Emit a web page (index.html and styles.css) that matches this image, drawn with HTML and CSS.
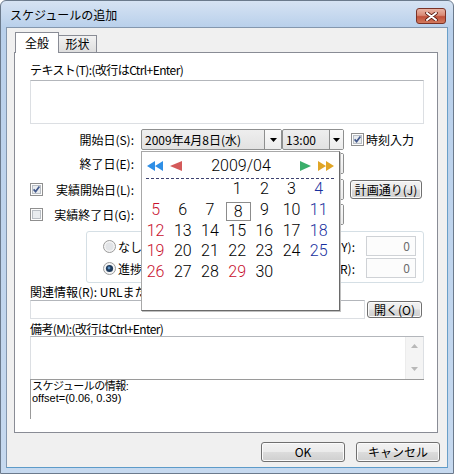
FILE: index.html
```html
<!DOCTYPE html>
<html lang="ja">
<head>
<meta charset="utf-8">
<title>スケジュールの追加</title>
<link rel="stylesheet" href="styles.css">
</head>
<body>
<div class="window">
  <div class="titlebar">
    <span class="title">スケジュールの追加</span>
    <span class="close">
      <svg width="13" height="9" viewBox="0 0 13 9"><path d="M2 1 L11 8 M11 1 L2 8" stroke="#5a1d14" stroke-width="3.6" stroke-linecap="round"/><path d="M2 1 L11 8 M11 1 L2 8" stroke="#fff" stroke-width="2" stroke-linecap="round"/></svg>
    </span>
  </div>
  <div class="client">
    <div class="tabs">
      <div class="tab active">全般</div>
      <div class="tab">形状</div>
    </div>
    <div class="panel">
      <div class="lbl tight">テキスト(T):(改行はCtrl+Enter)</div>
      <div class="textbox"></div>

      <div class="row r1">
        <div class="row-label">開始日(S):</div>
        <div class="combo date"><span class="combo-text">2009年4月8日(水)</span><span class="drop"><svg width="7" height="4" viewBox="0 0 7 4"><path d="M0 0 H7 L3.5 4 Z" fill="#000"/></svg></span></div>
        <div class="combo time"><span class="combo-text">13:00</span><span class="drop"><svg width="7" height="4" viewBox="0 0 7 4"><path d="M0 0 H7 L3.5 4 Z" fill="#000"/></svg></span></div>
        <div class="check"><span class="cb"><svg width="13" height="13" viewBox="0 0 13 13"><rect x="0.5" y="0.5" width="12" height="12" fill="#fdfdfd" stroke="#8f8f8f"/><rect x="2.5" y="2.5" width="8" height="8" fill="#e9ecef" stroke="#b9bec4"/><path d="M3.6 6.4 L5.6 8.6 L9.4 3.6" stroke="#43598c" stroke-width="1.7" fill="none"/></svg></span>時刻入力</div>
      </div>

      <div class="row r2">
        <div class="row-label">終了日(E):</div>
        <div class="combo date"><span class="combo-text"></span><span class="drop"></span></div>
        <div class="combo time"><span class="combo-text"></span><span class="drop"></span></div>
      </div>

      <div class="row r3">
        <div class="row-label cbl"><span class="cb"><svg width="13" height="13" viewBox="0 0 13 13"><rect x="0.5" y="0.5" width="12" height="12" fill="#fdfdfd" stroke="#8f8f8f"/><rect x="2.5" y="2.5" width="8" height="8" fill="#e9ecef" stroke="#b9bec4"/><path d="M3.6 6.4 L5.6 8.6 L9.4 3.6" stroke="#43598c" stroke-width="1.7" fill="none"/></svg></span><span>実績開始日(L):</span></div>
        <div class="combo date"><span class="combo-text"></span><span class="drop"></span></div>
        <div class="combo time"><span class="combo-text"></span><span class="drop"></span></div>
        <button class="btn plan">計画通り(J)</button>
      </div>

      <div class="row r4">
        <div class="row-label cbl"><span class="cb"><svg width="13" height="13" viewBox="0 0 13 13"><rect x="0.5" y="0.5" width="12" height="12" fill="#fdfdfd" stroke="#8f8f8f"/><rect x="2.5" y="2.5" width="8" height="8" fill="#e9ecef" stroke="#b9bec4"/></svg></span><span>実績終了日(G):</span></div>
        <div class="combo date"><span class="combo-text"></span><span class="drop"></span></div>
        <div class="combo time"><span class="combo-text"></span><span class="drop"></span></div>
      </div>

      <div class="group">
        <div class="grow">
          <div class="radio"><svg width="13" height="13" viewBox="0 0 13 13"><circle cx="6.5" cy="6.5" r="6" fill="#f4f4f4" stroke="#9a9a9a"/><circle cx="6.5" cy="6.5" r="4" fill="#e2e4e7"/></svg><span>なし(</span></div>
          <div class="gfield"><span>Y):</span><span class="num">0</span></div>
        </div>
        <div class="grow">
          <div class="radio"><svg width="13" height="13" viewBox="0 0 13 13"><circle cx="6.5" cy="6.5" r="6" fill="#f4f4f4" stroke="#9a9a9a"/><circle cx="6.5" cy="6.5" r="3.6" fill="#1f3b5c"/><circle cx="6" cy="6" r="1.4" fill="#5f93c4"/></svg><span>進捗</span></div>
          <div class="gfield"><span>R):</span><span class="num">0</span></div>
        </div>
      </div>

      <div class="lbl l-url">関連情報(R): URLまた</div>
      <div class="url-row">
        <div class="urlbox"></div>
        <button class="btn open">開く(O)</button>
      </div>

      <div class="lbl l-memo tight">備考(M):(改行はCtrl+Enter)</div>
      <div class="memo">
        <div class="vscroll">
          <svg width="7" height="4" viewBox="0 0 7 4"><path d="M0 4 L3.5 0 L7 4 Z" fill="#b8b8b8"/></svg>
          <svg width="7" height="4" viewBox="0 0 7 4"><path d="M0 0 H7 L3.5 4 Z" fill="#b8b8b8"/></svg>
        </div>
      </div>
      <div class="info">
        <div class="info-jp">スケジュールの情報:</div>
        <div>offset=(0.06, 0.39)</div>
      </div>

      <div class="calendar">
        <div class="cal-head">
          <svg class="arr" width="16" height="10" viewBox="0 0 16 10"><path d="M8 0 L0 5 L8 10 Z M16 0 L8 5 L16 10 Z" fill="#2f8fe6"/></svg>
          <svg class="arr red" width="12" height="10" viewBox="0 0 12 10"><path d="M12 0 L0 5 L12 10 Z" fill="#d45a5a"/></svg>
          <span class="cal-title">2009/04</span>
          <svg class="arr" width="11" height="10" viewBox="0 0 11 10"><path d="M0 0 L11 5 L0 10 Z" fill="#3aae6a"/></svg>
          <svg class="arr gold" width="16" height="10" viewBox="0 0 16 10"><path d="M0 0 L8 5 L0 10 Z M8 0 L16 5 L8 10 Z" fill="#e0a526"/></svg>
        </div>
        <div class="cal-line"></div>
        <div class="cal-grid">
          <span></span><span></span><span></span><span>1</span><span>2</span><span>3</span><span class="sat">4</span>
          <span class="sun">5</span><span>6</span><span>7</span><span><b class="today">8</b></span><span>9</span><span>10</span><span class="sat">11</span>
          <span class="sun">12</span><span>13</span><span>14</span><span>15</span><span>16</span><span>17</span><span class="sat">18</span>
          <span class="sun">19</span><span>20</span><span>21</span><span>22</span><span>23</span><span>24</span><span class="sat">25</span>
          <span class="sun">26</span><span>27</span><span>28</span><span class="sun">29</span><span>30</span><span></span><span></span>
        </div>
      </div>
    </div>
    <div class="buttons">
      <button class="btn big">OK</button>
      <button class="btn big">キャンセル</button>
    </div>
  </div>
</div>
</body>
</html>
```
FILE: styles.css
```css
html, body {
  margin: 0;
  background: #ffffff;
}
body {
  font-family: "Noto Sans CJK JP", sans-serif;
  font-size: 12px;
  color: #000;
}
.window {
  box-sizing: border-box;
  width: 454px;
  height: 474px;
  border: 1px solid #6b7a8c;
  border-radius: 6px 6px 0 0;
  background: linear-gradient(to bottom, #d6e3f3 0, #b9d0eb 26px, #c6d9ef 100%);
  display: flex;
  flex-direction: column;
  overflow: hidden;
}
.titlebar {
  height: 26px;
  flex: none;
  display: flex;
  align-items: flex-start;
  padding-left: 9px;
}
.title {
  margin-top: 7px;
  font-size: 12px;
  line-height: 14px;
}
.close {
  box-sizing: border-box;
  margin: 7px 7px 0 auto;
  width: 30px;
  height: 16px;
  border: 1px solid #7a3226;
  border-radius: 3px;
  background: linear-gradient(to bottom, #e8b3a4 0%, #d98a76 45%, #c0503a 55%, #d27a5e 100%);
  display: flex;
  align-items: center;
  justify-content: center;
}
.client {
  flex: 1;
  margin: 0 5px 5px;
  border: 1px solid #8497ae;
  border-bottom-color: #5d9bc9;
  border-right-color: #6a9fc8;
  background: #f0f0f0;
  display: flex;
  flex-direction: column;
}
.tabs {
  display: flex;
  align-items: flex-end;
  height: 20px;
  margin: 4px 0 0 8px;
  position: relative;
  z-index: 1;
}
.tab {
  box-sizing: border-box;
  width: 38px;
  height: 17px;
  border: 1px solid #898c95;
  border-left: none;
  border-bottom: none;
  background: linear-gradient(to bottom, #f2f2f2, #dedede);
  text-align: center;
  line-height: 16px;
}
.tab.active {
  width: 44px;
  height: 21px;
  margin-bottom: -1px;
  border-left: 1px solid #898c95;
  background: #ffffff;
  line-height: 20px;
}
.panel {
  position: relative;
  box-sizing: border-box;
  width: 424px;
  height: 381px;
  margin-left: 7px;
  border: 1px solid #898c95;
  background: #ffffff;
  padding: 10px 0 0 15px;
}
.lbl {
  height: 14px;
  line-height: 14px;
  white-space: nowrap;
}
.tight {
  letter-spacing: -0.6px;
}
.textbox {
  box-sizing: border-box;
  width: 394px;
  height: 44px;
  margin-top: 3px;
  border: 1px solid #dcdfe3;
  border-top-color: #b3b6bb;
  background: #fff;
}
.row {
  display: flex;
  align-items: center;
  height: 21px;
}
.r1 { margin-top: 5px; }
.r2 { margin-top: 3px; }
.r3 { margin-top: 5px; }
.r4 { margin-top: 4px; }
.row-label {
  width: 104px;
  flex: none;
  margin-right: 7px;
  display: flex;
  align-items: center;
  justify-content: flex-end;
  white-space: nowrap;
  line-height: 14px;
}
.row-label.cbl {
  justify-content: space-between;
}
.combo {
  box-sizing: border-box;
  height: 21px;
  display: flex;
  border: 1px solid #8e8f8f;
  border-radius: 2px;
  background: linear-gradient(to bottom, #eeeeee, #e2e2e2);
  flex: none;
}
.combo.date { width: 141px; }
.combo.time { width: 62px; }
.combo-text {
  flex: 1;
  padding-left: 3px;
  line-height: 19px;
  white-space: nowrap;
  overflow: hidden;
}
.drop {
  width: 16px;
  border-left: 1px solid #8e8f8f;
  background: linear-gradient(to bottom, #fafafa, #ececec);
  display: flex;
  align-items: center;
  justify-content: center;
}
.combo.time .drop { width: 13px; }
.check {
  margin-left: 7px;
  display: flex;
  align-items: center;
  gap: 2px;
  white-space: nowrap;
}
.cb {
  width: 13px;
  height: 13px;
  display: inline-flex;
  flex: none;
}
.btn {
  box-sizing: border-box;
  border: 1px solid #707070;
  border-radius: 3px;
  background: linear-gradient(to bottom, #f2f2f2 0%, #ebebeb 48%, #dcdcdc 52%, #cfcfcf 100%);
  box-shadow: inset 0 0 0 1px #fbfbfb;
  font-family: "Noto Sans CJK JP", sans-serif;
  font-size: 12px;
  color: #000;
  padding: 0;
  line-height: 14px;
  white-space: nowrap;
}
.btn.plan {
  margin-left: 6px;
  width: 72px;
  height: 19px;
}
.group {
  box-sizing: border-box;
  width: 338px;
  height: 52px;
  margin: 6px 0 0 56px;
  border: 1px solid #d5dfe5;
  border-radius: 3px;
  padding: 4px 7px 0 16px;
}
.grow {
  display: flex;
  align-items: center;
  height: 20px;
}
.grow + .grow { margin-top: 2px; }
.radio {
  display: flex;
  align-items: center;
  gap: 2px;
  white-space: nowrap;
}
.gfield {
  margin-left: auto;
  display: flex;
  align-items: center;
  white-space: nowrap;
}
.num {
  box-sizing: border-box;
  width: 50px;
  height: 20px;
  margin-left: 11px;
  border: 1px solid #cfd2d6;
  background: #fcfcfc;
  color: #6d6d6d;
  text-align: right;
  padding-right: 5px;
  line-height: 18px;
}
.l-url { margin-top: 2px; }
.url-row {
  display: flex;
  align-items: center;
  height: 19px;
  margin-top: 1px;
}
.urlbox {
  box-sizing: border-box;
  width: 335px;
  height: 19px;
  border: 1px solid #dcdfe3;
  border-top-color: #b3b6bb;
  background: #fff;
}
.btn.open {
  margin-left: 2px;
  width: 55px;
  height: 17px;
}
.l-memo { margin-top: 3px; }
.memo {
  box-sizing: border-box;
  width: 394px;
  height: 44px;
  border: 1px solid #dcdfe3;
  border-top-color: #b3b6bb;
  background: #fff;
  display: flex;
  justify-content: flex-end;
}
.vscroll {
  width: 17px;
  background: #f4f4f4;
  border-left: 1px solid #ececec;
  display: flex;
  flex-direction: column;
  align-items: center;
  justify-content: space-between;
  padding: 7px 0 8px;
}
.info {
  box-sizing: border-box;
  width: 394px;
  height: 40px;
  margin-top: -1px;
  border-top: 1px solid #9a9a9a;
  border-left: 1px solid #9a9a9a;
  padding-left: 1px;
  font-family: "Liberation Sans", "Noto Sans CJK JP", sans-serif;
  font-size: 11px;
  line-height: 12px;
}
.info-jp {
  letter-spacing: -0.5px;
}
.calendar {
  position: absolute;
  left: 126px;
  top: 98px;
  box-sizing: border-box;
  width: 199px;
  height: 160px;
  border: 1px solid #a8a8a8;
  border-right-color: #6a6a6a;
  border-bottom-color: #6a6a6a;
  background: #fff;
  box-shadow: 1px 1px 0 #c0c0c0;
  z-index: 2;
  font-family: Roboto, "Noto Sans", sans-serif;
}
.cal-head {
  height: 26px;
  display: flex;
  align-items: center;
  padding: 2px 5px 0;
  box-sizing: border-box;
}
.arr { flex: none; }
.arr.red { margin-left: 7px; }
.arr.gold { margin-left: 7px; }
.cal-title {
  flex: 1;
  text-align: center;
  font-size: 16px;
  line-height: 20px;
  font-weight: 300;
}
.cal-line {
  height: 1px;
  margin: 0 3px 0 4px;
  background: repeating-linear-gradient(to right, #3d4270 0 3px, transparent 3px 5px);
}
.cal-grid {
  display: grid;
  grid-template-columns: repeat(7, 27.2px);
  grid-auto-rows: 20.75px;
  font-size: 16px;
  line-height: 20.75px;
  text-align: center;
  font-weight: 300;
}
.sun { color: #c8102e; }
.sat { color: #18309e; }
.today {
  display: inline-block;
  box-sizing: border-box;
  width: 25px;
  height: 19px;
  margin: 2px 0 0 2px;
  border: 1px solid #8c8c8c;
  line-height: 17px;
  font-weight: 300;
  vertical-align: top;
}
.buttons {
  display: flex;
  justify-content: flex-end;
  gap: 11px;
  margin-top: 9px;
  padding-right: 7px;
}
.btn.big {
  width: 84px;
  height: 20px;
}
```
